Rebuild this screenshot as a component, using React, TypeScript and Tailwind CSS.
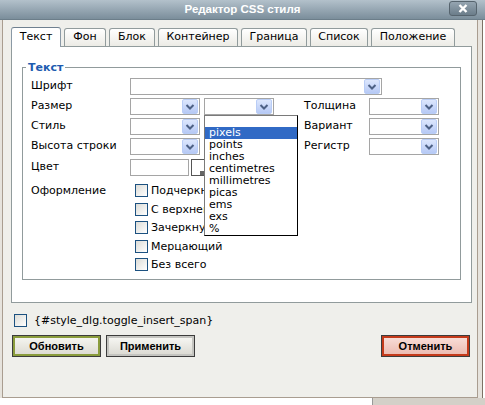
import React from 'react';

const font = { fontFamily: '"DejaVu Sans", Verdana, sans-serif' };

function Arrow() {
    return (
        <div className="w-[16px] h-[15px] rounded-[2px] border border-[#b9cdf6] bg-gradient-to-b from-[#dde7fd] to-[#b6c9f5] flex items-center justify-center">
            <svg width="10" height="8" viewBox="0 0 10 8">
                <path d="M1.5 2 L5 5.5 L8.5 2" fill="none" stroke="#4d6185" strokeWidth="2" />
            </svg>
        </div>
    );
}

function Select({ w }: { w: string }) {
    return (
        <div className={`${w} h-[17px] shrink-0 border border-[#a5a5a5] bg-white flex items-center justify-end pr-px`}>
            <Arrow />
        </div>
    );
}

function Check({ label }: { label: string }) {
    return (
        <div className="flex items-center gap-[3px] h-[13px]">
            <div className="w-[13px] h-[13px] shrink-0 border border-[#1c5180] bg-gradient-to-br from-[#dcdcd7] to-white" />
            <span className="text-[11px] leading-[13px] text-black whitespace-nowrap">{label}</span>
        </div>
    );
}

const units = ['', 'pixels', 'points', 'inches', 'centimetres', 'millimetres', 'picas', 'ems', 'exs', '%'];

const tabs = [
    { name: 'Текст', w: 'w-[50px]', active: true },
    { name: 'Фон', w: 'w-[42px]' },
    { name: 'Блок', w: 'w-[46px]' },
    { name: 'Контейнер', w: 'w-[80px]' },
    { name: 'Граница', w: 'w-[66px]' },
    { name: 'Список', w: 'w-[58px]' },
    { name: 'Положение', w: 'w-[84px]' },
];

function DlgButton({ label, tone }: { label: string; tone: 'green' | 'gray' | 'red' }) {
    const inner =
        tone === 'green'
            ? 'border-[#8a9c3c] from-[#f4f4ef] to-[#dedcd3]'
            : tone === 'red'
            ? 'border-[#c43a1a] from-[#f8dcd6] to-[#ecbcb2]'
            : 'border-[#c4c4c0] from-[#f6f6f2] to-[#dcdbd4]';
    return (
        <div className="w-[89px] h-[22px] border border-[#3c3c3c] shrink-0">
            <div
                className={`w-full h-full border-2 bg-gradient-to-b ${inner} flex items-center justify-center text-[11px] font-bold text-black`}
                style={{ fontFamily: '"Liberation Sans", Tahoma, sans-serif' }}
            >
                {label}
            </div>
        </div>
    );
}

export default function App() {
    return (
        <div className="w-[485px] h-[405px] bg-white overflow-hidden" style={font}>
            {/* Title bar */}
            <div className="h-[20px] w-[485px] bg-gradient-to-b from-[#b3c1cb] to-[#7b8e9b] border-b border-[#6c7e8a] flex items-center relative">
                <div
                    className="flex-1 text-center text-white font-bold text-[11.5px]"
                    style={{ fontFamily: '"Liberation Sans", Tahoma, sans-serif' }}
                >
                    Редактор CSS стиля
                </div>
                <div className="absolute left-[449px] top-[1px] w-[28px] h-[15px] rounded-[3px] border border-[#56646e] bg-gradient-to-b from-[#95a5b1] to-[#6b7d8a] flex items-center justify-center">
                    <svg width="10" height="9" viewBox="0 0 10 9">
                        <path d="M1.5 1 L8.5 8 M8.5 1 L1.5 8" stroke="white" strokeWidth="2.4" />
                    </svg>
                </div>
            </div>

            {/* Window body */}
            <div className="w-[483px] h-[378px] bg-[#e6e3dd] border-r border-[#7d7265] pl-[2px] pr-[4px]">
                <div className="h-full border-l border-r border-b border-[#a99d90] bg-[#efefeb] pl-[8px] pr-[5px] pt-[7px]">
                    {/* Tabs */}
                    <div className="flex items-end gap-[3px] h-[19px]">
                        {tabs.map((t) =>
                            t.active ? (
                                <div
                                    key={t.name}
                                    className={`${t.w} h-[20px] -mb-px relative z-10 bg-white border border-b-0 border-[#8a99a6] border-t-[#6f8090] rounded-t-[3px] flex items-center justify-center text-[11px] text-black`}
                                >
                                    {t.name}
                                </div>
                            ) : (
                                <div
                                    key={t.name}
                                    className={`${t.w} h-[18px] bg-gradient-to-b from-white to-[#ecebe5] border border-b-0 border-[#919b9c] rounded-t-[3px] flex items-center justify-center text-[11px] text-black`}
                                >
                                    {t.name}
                                </div>
                            )
                        )}
                    </div>

                    {/* Panel */}
                    <div className="w-[461px] h-[257px] bg-white border border-[#919b9c] px-[10px] pt-[14px]">
                        <fieldset className="border border-[#919b9c] h-[219px] pl-[8px] pt-[4px]">
                            <legend className="px-[2px] ml-[-5px] text-[11px] leading-[13px] font-bold text-[#1e5bb0]">Текст</legend>

                            <div className="flex flex-col gap-[3px] text-[11px] text-black">
                                <div className="flex items-center h-[17px]">
                                    <span className="w-[99px] shrink-0">Шрифт</span>
                                    <Select w="w-[252px]" />
                                </div>
                                <div className="flex items-center h-[17px]">
                                    <span className="w-[99px] shrink-0">Размер</span>
                                    <Select w="w-[70px]" />
                                    <div className="relative ml-[4px]">
                                        <Select w="w-[70px]" />
                                        {/* open unit list */}
                                        <div className="absolute left-0 top-full z-20 w-[94px] bg-white border border-black border-l-[#7a7a7a] border-t-[#7a7a7a]">
                                            {units.map((u) => (
                                                <div
                                                    key={u || 'blank'}
                                                    className={`pl-[4px] text-[11px] ${u === '' ? 'h-[11px]' : 'h-[12px] leading-[12px]'} ${u === 'pixels' ? 'bg-[#316ac5] text-white' : 'text-black'}`}
                                                >
                                                    {u}
                                                </div>
                                            ))}
                                        </div>
                                    </div>
                                    <span className="w-[65px] shrink-0 ml-[30px]">Толщина</span>
                                    <Select w="w-[70px]" />
                                </div>
                                <div className="flex items-center h-[17px]">
                                    <span className="w-[99px] shrink-0">Стиль</span>
                                    <Select w="w-[70px]" />
                                    <span className="w-[65px] shrink-0 ml-[104px]">Вариант</span>
                                    <Select w="w-[70px]" />
                                </div>
                                <div className="flex items-center h-[17px]">
                                    <span className="w-[99px] shrink-0">Высота строки</span>
                                    <Select w="w-[70px]" />
                                    <span className="w-[65px] shrink-0 ml-[104px]">Регистр</span>
                                    <Select w="w-[70px]" />
                                </div>
                                <div className="flex items-center h-[17px] mt-px">
                                    <span className="w-[99px] shrink-0">Цвет</span>
                                    <div className="w-[59px] h-[17px] border border-[#a5a5a5] bg-white" />
                                    <div className="ml-[2px] w-[14px] h-[17px] border border-[#555] bg-white flex items-end justify-end">
                                        <div className="w-[4px] h-[4px] bg-[#666]" />
                                    </div>
                                </div>
                                <div className="flex items-start mt-[5px]">
                                    <span className="w-[104px] shrink-0 leading-[13px]">Оформление</span>
                                    <div className="flex flex-col gap-[5.5px]">
                                        <Check label="Подчеркнутый" />
                                        <Check label="С верхней чертой" />
                                        <Check label="Зачеркнутый" />
                                        <Check label="Мерцающий" />
                                        <Check label="Без всего" />
                                    </div>
                                </div>
                            </div>
                        </fieldset>
                    </div>

                    {/* Insert span toggle */}
                    <div className="mt-[11px] ml-[3px] flex items-center gap-[7px]">
                        <div className="w-[13px] h-[13px] border border-[#1c5180] bg-gradient-to-br from-[#dcdcd7] to-white" />
                        <span className="text-[11px] leading-[13px] text-black">{'{#style_dlg.toggle_insert_span}'}</span>
                    </div>

                    {/* Buttons */}
                    <div className="mt-[8px] ml-[1px] w-[458px] flex items-center gap-[5px]">
                        <DlgButton label="Обновить" tone="green" />
                        <DlgButton label="Применить" tone="gray" />
                        <div className="flex-1" />
                        <DlgButton label="Отменить" tone="red" />
                    </div>
                </div>
            </div>
            <div className="flex h-[7px]">
                <div className="w-[372px] bg-white" />
                <div className="flex-1 bg-[#d4d0c8] border-l border-[#999]" />
            </div>
        </div>
    );
}
